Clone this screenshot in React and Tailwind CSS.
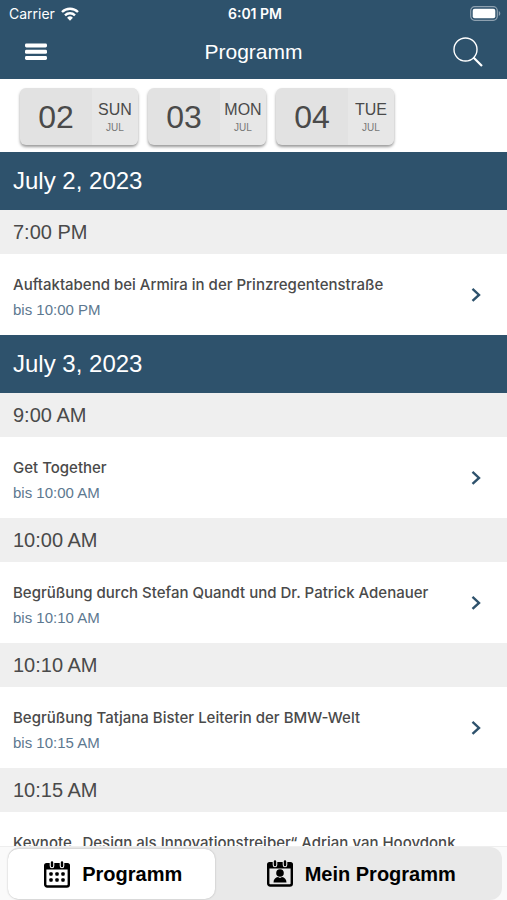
const days = [
    { number: "02", weekday: "SUN", month: "JUL" },
    { number: "03", weekday: "MON", month: "JUL" },
    { number: "04", weekday: "TUE", month: "JUL" },
];

const program = [
    {
        date: "July 2, 2023",
        sessions: [
            {
                start: "7:00 PM",
                title: "Auftaktabend bei Armira in der Prinzregentenstraße",
                end: "bis 10:00 PM",
            },
        ],
    },
    {
        date: "July 3, 2023",
        sessions: [
            { start: "9:00 AM", title: "Get Together", end: "bis 10:00 AM" },
            {
                start: "10:00 AM",
                title: "Begrüßung durch Stefan Quandt und Dr. Patrick Adenauer",
                end: "bis 10:10 AM",
            },
            {
                start: "10:10 AM",
                title: "Begrüßung Tatjana Bister Leiterin der BMW-Welt",
                end: "bis 10:15 AM",
            },
            {
                start: "10:15 AM",
                title: "Keynote „Design als Innovationstreiber“ Adrian van Hooydonk",
                end: "",
            },
        ],
    },
];

const App = () => {
    return (
        <div className="h-screen flex flex-col overflow-hidden bg-white text-[#4a4a4a] font-['Liberation_Sans',Arial,sans-serif]">
            <header className="bg-[#2e526c] text-white shrink-0">
                <StatusBar />
                <NavBar />
            </header>
            <DayPicker />
            <main className="flex-1 min-h-0 overflow-hidden">
                {program.map((day) => (
                    <ProgramDay key={day.date} day={day} />
                ))}
            </main>
            <TabBar />
        </div>
    );
};

const StatusBar = () => {
    return (
        <div className="grid grid-cols-3 items-center h-[27px] pl-[9px] pr-[6px] font-['Inter',sans-serif]">
            <div className="flex items-center gap-[6px] text-sm">
                <span>Carrier</span>
                <WifiIcon />
            </div>
            <span className="text-center text-sm font-semibold whitespace-nowrap">6:01 PM</span>
            <div className="flex justify-end">
                <BatteryIcon />
            </div>
        </div>
    );
};

const NavBar = () => {
    return (
        <div className="grid grid-cols-[1fr_auto_1fr] items-center h-[50px] mb-[2px] px-6">
            <button aria-label="Menu" className="justify-self-start">
                <MenuIcon />
            </button>
            <h1 className="text-[21px] leading-7">Programm</h1>
            <button aria-label="Suche" className="justify-self-end">
                <SearchIcon />
            </button>
        </div>
    );
};

const DayPicker = () => {
    return (
        <nav className="flex gap-[10px] h-[73px] pt-[9px] pl-5 shrink-0">
            {days.map((day) => (
                <button
                    key={day.number}
                    className="flex w-[118px] h-[57px] rounded-md overflow-hidden bg-[#e2e2e2] shadow-[0_2px_3px_#00000066]"
                >
                    <span className="w-[72px] h-full flex items-center justify-center text-[32px]">
                        {day.number}
                    </span>
                    <span className="flex-1 h-full flex flex-col items-center pt-3 bg-[#e7e7e7]">
                        <span className="text-base leading-5">{day.weekday}</span>
                        <span className="text-[10px] leading-4 text-[#777777]">{day.month}</span>
                    </span>
                </button>
            ))}
        </nav>
    );
};

const ProgramDay = ({ day }) => {
    return (
        <section>
            <h2 className="h-[58px] px-[13px] flex items-center bg-[#2e526c] text-white text-2xl">
                {day.date}
            </h2>
            {day.sessions.map((session) => (
                <Session key={session.start} session={session} />
            ))}
        </section>
    );
};

const Session = ({ session }) => {
    return (
        <div>
            <h3 className="h-11 px-[13px] flex items-center bg-[#efefef] text-xl">
                {session.start}
            </h3>
            <a
                href="#"
                className="h-[81px] pl-[13px] pr-[26px] flex items-center justify-between"
            >
                <div className="pt-[5px] whitespace-nowrap">
                    <p className="text-[15px] leading-6 font-medium font-['Inter',sans-serif]">
                        {session.title}
                    </p>
                    <p className="h-[25px] text-[15px] leading-[25px] text-[#5d7890]">
                        {session.end}
                    </p>
                </div>
                <ChevronIcon />
            </a>
        </div>
    );
};

const TabBar = () => {
    return (
        <nav className="h-[54px] pl-2 pr-[5px] shrink-0 border-t border-[#eeeeee] bg-[#fafafa]">
            <div className="h-full flex rounded-xl bg-[#e9e9e9] text-black text-xl font-bold">
                <button className="flex items-center justify-center gap-3 w-[42%] mt-[2px] mb-px pl-[3px] rounded-[10px] bg-white text-black shadow-[0_0_2px_#00000040]">
                    <CalendarIcon />
                    Programm
                </button>
                <button className="flex-1 flex items-center justify-center gap-3 pl-[5px]">
                    <MyCalendarIcon />
                    Mein Programm
                </button>
            </div>
        </nav>
    );
};

const MenuIcon = () => {
    return (
        <svg width="24" height="18" viewBox="0 0 24 18" fill="currentColor">
            <rect x="1" y="0.5" width="22" height="4" rx="1.4" />
            <rect x="1" y="6.8" width="22" height="4" rx="1.4" />
            <rect x="1" y="13" width="22" height="4" rx="1.4" />
        </svg>
    );
};

const WifiIcon = () => {
    return (
        <svg width="18" height="14" viewBox="0 0 18 14" fill="none" stroke="currentColor" strokeWidth="2.4">
            <path d="M1 5a11.5 11.5 0 0 1 16 0" />
            <path d="M4 8.3a7.2 7.2 0 0 1 10 0" />
            <path d="M9 13.8 6.1 10.7a4.2 4.2 0 0 1 5.8 0z" fill="currentColor" stroke="none" />
        </svg>
    );
};

const BatteryIcon = () => {
    return (
        <svg width="31" height="15" viewBox="0 0 31 15">
            <rect x="0.7" y="0.7" width="26.6" height="13.6" rx="4" fill="none" stroke="#8ea1b0" strokeWidth="1.2" />
            <rect x="2.7" y="2.7" width="22.6" height="9.6" rx="2" fill="white" />
            <path d="M28.8 5v5c2-1 2-4 0-5z" fill="#8ea1b0" />
        </svg>
    );
};

const SearchIcon = () => {
    return (
        <svg width="30" height="30" viewBox="0 0 30 30" fill="none" stroke="currentColor">
            <circle cx="12.5" cy="12.5" r="11.5" strokeWidth="1.4" />
            <path d="M20.5 20.5 29 29" strokeWidth="2.2" />
        </svg>
    );
};

const ChevronIcon = () => {
    return (
        <svg width="10" height="15" viewBox="0 0 10 15" fill="none" stroke="#2e526c" strokeWidth="2.4">
            <path d="M1.5 1.9 8 7.9l-6.5 6" />
        </svg>
    );
};

const CalendarFrame = ({ gap, children }) => {
    return (
        <svg width="26" height="27" viewBox="0 0 26 27">
            <rect x="1.2" y="4" width="23.6" height="21.5" rx="2" fill="none" stroke="black" strokeWidth="2.4" />
            <path d="M0 8.500V4.500q0-2.500 2.500-2.500h21q2.500 0 2.500 2.500v4z" fill="black" />
            <path d="M8 1v4M18 1v4" stroke={gap} strokeWidth="4.600" strokeLinecap="round" />
            <path d="M8 1.500v3.500M18 1.500v3.500" stroke="black" strokeWidth="2.400" strokeLinecap="round" />
            {children}
        </svg>
    );
};

const CalendarIcon = () => {
    return (
        <CalendarFrame gap="white">
            {[13, 19].map((y) =>
                [7, 13, 19].map((x) => (
                    <rect key={`${x}-${y}`} x={x - 1.7} y={y - 1.7} width="3.4" height="3.4" rx="1" />
                ))
            )}
        </CalendarFrame>
    );
};

const MyCalendarIcon = () => {
    return (
        <CalendarFrame gap="#e9e9e9">
            <circle cx="13" cy="13" r="3.8" />
            <path d="M6.5 22.500c0-3.500 2-5 4.500-5.500l2 1 2-1c2.500.5 4.500 2 4.500 5.500z" />
        </CalendarFrame>
    );
};

export default App;
